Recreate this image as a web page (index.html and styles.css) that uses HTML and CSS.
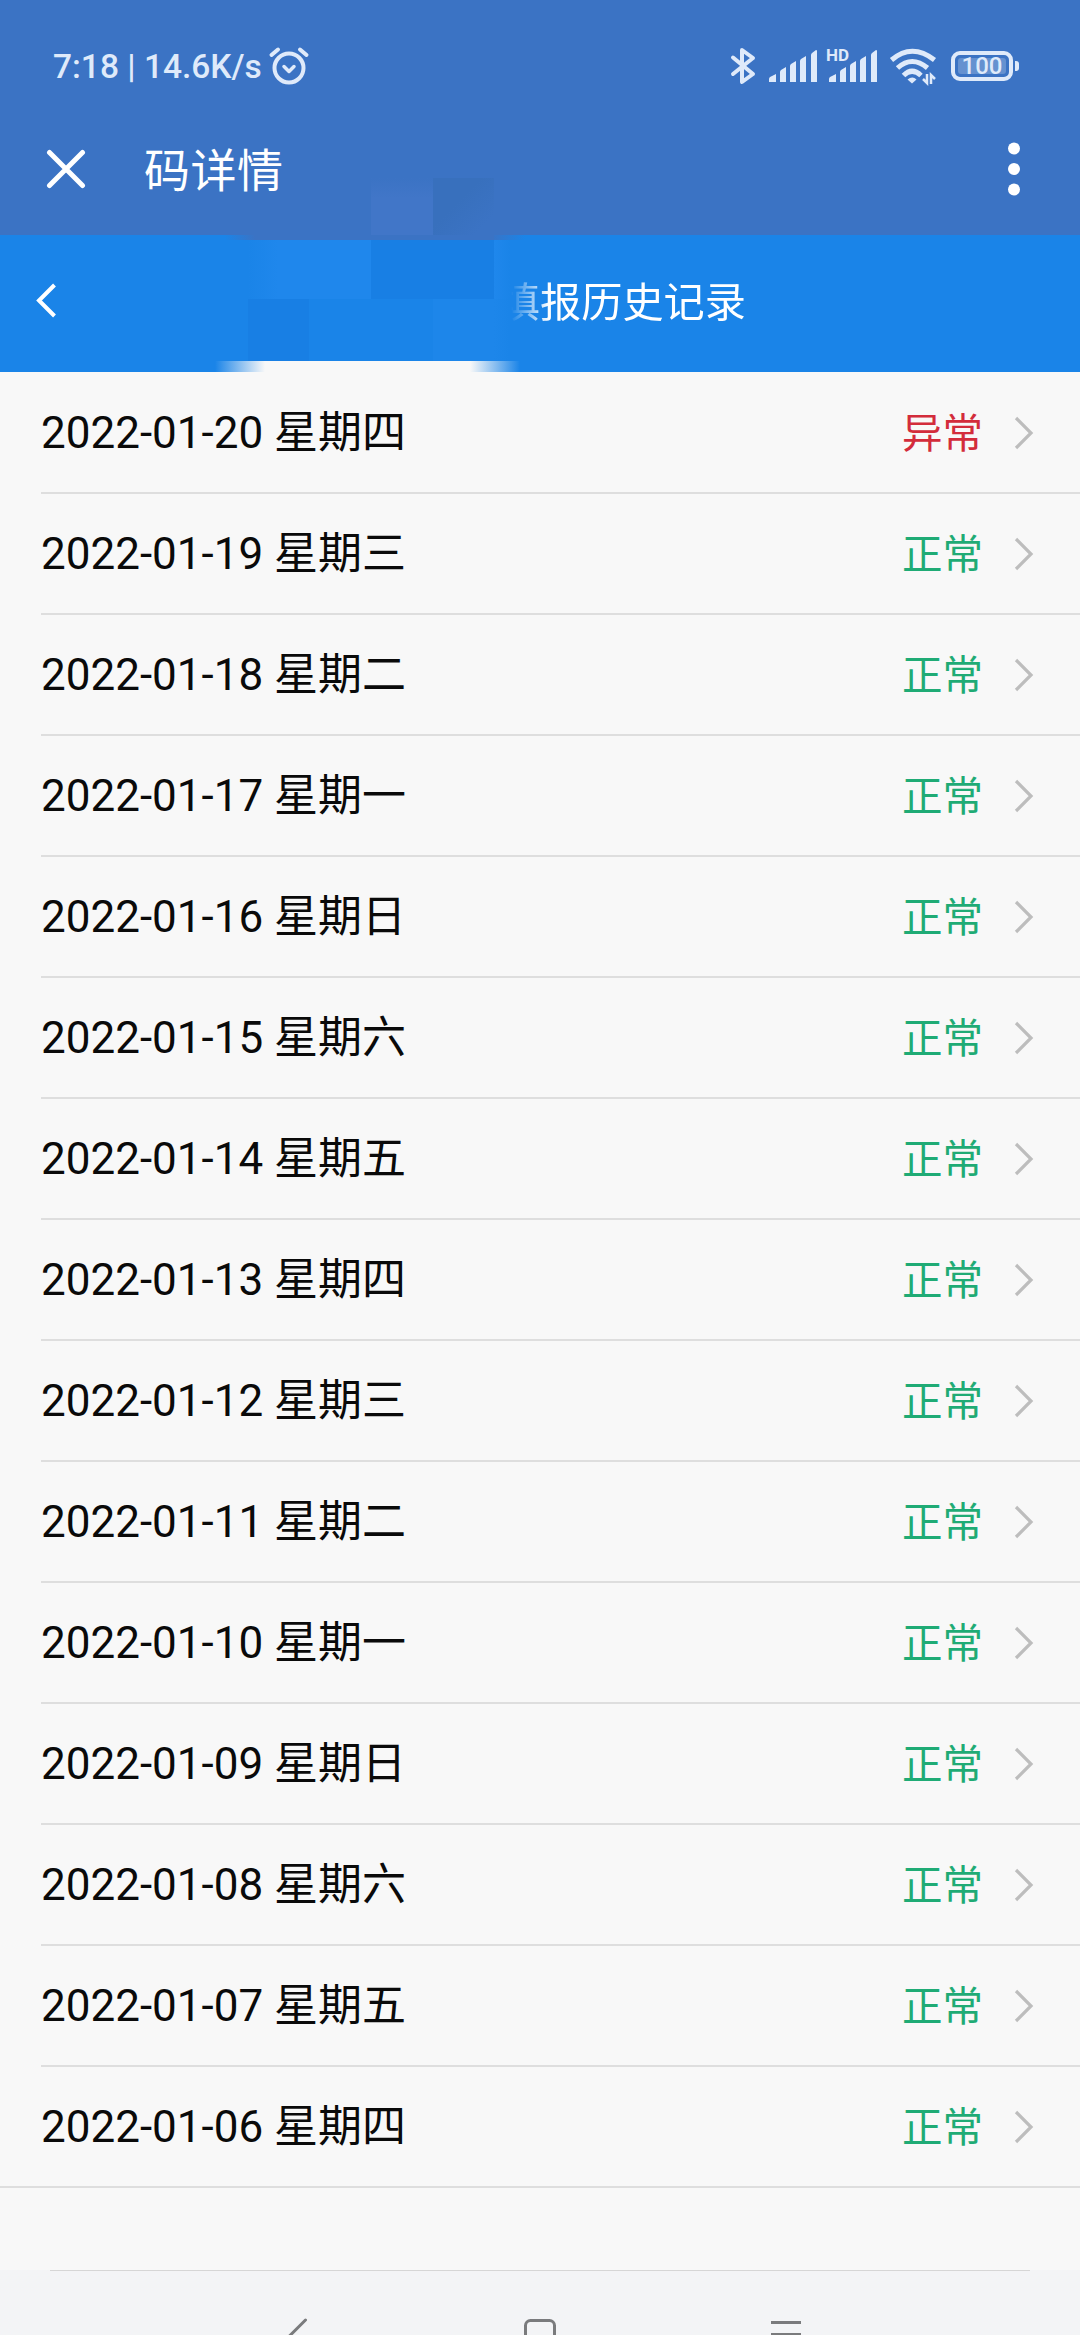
FILE: index.html
```html
<!doctype html>
<html lang="zh-CN">

<head>
    <meta charset="UTF-8">
    <meta name="viewport" content="width=device-width, initial-scale=1.0">
    <title>码详情</title>
    <link rel="stylesheet" href="styles.css">
</head>

<body>
    <div class="top">
        <div class="status-bar">
            <span class="status-text">7:18 | 14.6K/s</span>
            <svg class="alarm" width="42" height="40" viewBox="0 0 42 40" fill="none" stroke="#dfeafa" stroke-linecap="round" stroke-linejoin="round">
                <circle cx="21" cy="22" r="14.5" stroke-width="4" />
                <path d="M3.5 9L10 3.5M38.5 9L32 3.5" stroke-width="4" />
                <path d="M16 20.5l5 5 5-5" stroke-width="3.5" />
            </svg>
            <div class="status-icons">
                <svg width="26" height="40" viewBox="0 0 26 40" fill="none" stroke="#dfeafa" stroke-width="4" stroke-linecap="round" stroke-linejoin="round">
                    <path d="M3 11.5L23 28 12 36V4L23 12 3 28" />
                </svg>
                <svg class="signal" width="50" height="40" viewBox="0 0 50 40" fill="#dfeafa">
                    <path d="M1 36v-3q0-1 1-2l6-3v8zM12 36V26q0-1 1-2l5-3v15zM22 36V20q0-1 1-2l5-3v21zM32 36V15q0-1 1-2l5-3v26zM43 36V9q0-1 1-2l4-3q1 0 1 1v31z" />
                </svg>
                <div class="signal-hd">
                    <span class="hd">HD</span>
                    <svg width="50" height="40" viewBox="0 0 50 40" fill="#dfeafa">
                        <path d="M1 36v-3q0-1 1-2l6-3v8zM12 36V26q0-1 1-2l5-3v15zM22 36V20q0-1 1-2l5-3v21zM32 36V15q0-1 1-2l5-3v26zM43 36V9q0-1 1-2l4-3q1 0 1 1v31z" />
                    </svg>
                </div>
                <svg class="wifi" width="48" height="40" viewBox="0 0 48 40" fill="none" stroke="#dfeafa" stroke-width="5">
                    <path d="M2.500 14Q23-3.500 45.500 14M8.500 22Q23 9 38.500 22M14.500 29.500Q23 21 32 29.500" />
                    <path d="M18.500 33.500q5-4 9 0l-4.500 4z" fill="#dfeafa" stroke="none" />
                    <path d="M38 28v9l-4-4M42 38v-9l4 4" stroke-width="2.5" />
                </svg>
                <div class="battery"><span>100</span></div>
            </div>
        </div>
        <div class="app-bar">
            <svg width="40" height="40" viewBox="0 0 40 40" fill="none" stroke="#fff" stroke-width="5" stroke-linecap="round">
                <path d="M3.5 3.5l33 33M36.5 3.5l-33 33" />
            </svg>
            <h1>码详情</h1>
            <svg class="more" width="12" height="54" viewBox="0 0 12 54" fill="#fff">
                <circle cx="6" cy="6.5" r="6" />
                <circle cx="6" cy="27" r="6" />
                <circle cx="6" cy="47.5" r="6" />
            </svg>
        </div>
    </div>

    <div class="nav-bar">
        <svg width="22" height="36" viewBox="0 0 22 36" fill="none" stroke="#fff" stroke-width="4">
            <path d="M19.5 2L4 17.500l15.500 15.500" />
        </svg>
        <h2>填报历史记录</h2>
        <!-- 姓名打码 -->
        <div class="mosaic">
            <i></i><i></i><i class="light"></i><i class="dark"></i><i></i>
            <i class="b2"></i><i class="b2"></i><i class="b1"></i><i class="b1"></i><i class="b2"></i>
            <i class="b1"></i><i></i><i></i><i class="b3"></i><i class="b3"></i>
        </div>
        <div class="smudge-top"></div>
        <div class="smudge"></div>
    </div>

    <ul class="list" id="list"></ul>

    <div class="system-nav">
        <svg width="1080" height="65" viewBox="0 0 1080 65" fill="none" stroke="#7a7b7d" stroke-width="3">
            <path d="M305.500 50L280 75.500" stroke-linecap="round" />
            <rect x="525.500" y="50.500" width="29" height="30" rx="5" />
            <path d="M771 52.500h30M771 64.500h30" />
        </svg>
    </div>

    <script>
        const days = ['四', '三', '二', '一', '日', '六', '五'];
        const list = document.getElementById('list');

        for (let i = 0; i < 15; i++) {
            const date = '2022-01-' + String(20 - i).padStart(2, '0');
            const error = i === 0;
            const li = document.createElement('li');
            li.innerHTML = `
                <span class="date">${date} 星期${days[i % 7]}</span>
                <span class="state ${error ? 'error' : ''}">${error ? '异常' : '正常'}</span>
                <svg width="20" height="34" viewBox="0 0 20 34" fill="none" stroke="#bdbdbd" stroke-width="3.2">
                    <path d="M2 2l15 15L2 32" />
                </svg>`;
            list.appendChild(li);
        }
    </script>
</body>

</html>
```
FILE: styles.css
```css
* {
    box-sizing: border-box;
}

body {
    margin: 0;
    width: 1080px;
    height: 2335px;
    overflow: hidden;
    display: flex;
    flex-direction: column;
    background-color: #f8f8f8;
    font-family: Roboto, "Noto Sans CJK SC", sans-serif;
    color: #0a0a0a;
}

svg {
    display: block;
    flex-shrink: 0;
}

.top {
    height: 235px;
    background-color: #3b73c4;
}

.status-bar {
    height: 132px;
    padding: 0 61px 0 53px;
    display: flex;
    align-items: center;
    color: #dfeafa;
}

.status-text {
    padding-top: 2px;
    font-size: 33.5px;
    font-weight: 500;
    line-height: 40px;
    white-space: nowrap;
}

.alarm {
    margin-left: 6px;
}

.status-icons {
    margin-left: auto;
    display: flex;
    align-items: center;
}

.signal {
    margin-left: 12px;
}

.signal-hd {
    position: relative;
    margin-left: 10px;
}

.hd {
    position: absolute;
    left: -2px;
    top: 1px;
    font-size: 17px;
    font-weight: 700;
    line-height: 17px;
}

.wifi {
    margin-left: 11px;
}

.battery {
    position: relative;
    width: 62px;
    height: 30px;
    margin: 0 6px 0 14px;
    padding: 3px;
    border: 4px solid #dfeafa;
    border-radius: 9px;
}

.battery span {
    display: block;
    height: 16px;
    border-radius: 3px;
    background-color: #6591d0;
    font-size: 24px;
    font-weight: 500;
    line-height: 17px;
    text-align: center;
}

.battery::after {
    content: "";
    position: absolute;
    right: -10px;
    top: 6px;
    width: 4px;
    height: 10px;
    border-radius: 0 3px 3px 0;
    background-color: #dfeafa;
}

.app-bar {
    height: 74px;
    padding: 0 60px 0 46px;
    display: flex;
    align-items: center;
    color: #fff;
}

.app-bar h1 {
    margin: 0 0 0 58px;
    padding-top: 4px;
    font-size: 46px;
    font-weight: 400;
    line-height: 60px;
    letter-spacing: 0.5px;
}

.more {
    margin-left: auto;
}

.nav-bar {
    position: relative;
    height: 137px;
    padding: 0 334px 6px 35px;
    display: flex;
    align-items: center;
    justify-content: space-between;
    background-color: #1a84e8;
    color: #fff;
}

.nav-bar h2 {
    margin: 0;
    padding-top: 5px;
    font-size: 41.2px;
    font-weight: 400;
    line-height: 60px;
    -webkit-mask-image: linear-gradient(to right, transparent 12px, #000 50px);
    mask-image: linear-gradient(to right, transparent 12px, #000 50px);
}

.mosaic {
    position: absolute;
    left: 248px;
    top: -57px;
    width: 262px;
    display: grid;
    grid-template-columns: 61px 62px 62px 61px 16px;
    grid-template-rows: 62px 59px 62px;
}

.mosaic .light {
    background: linear-gradient(to bottom, #3b73c4, #4176c8 20px);
}

.mosaic .dark {
    background: linear-gradient(to bottom right, #3870bd 40%, #3b73c4 80%);
}

.mosaic .b1 {
    background-color: #187fe4;
}

.mosaic .b2 {
    background-color: #1f87ec;
}

.mosaic .b2:nth-child(6) {
    background: linear-gradient(to right, #1a84e8, #1f87ec 30px);
}

.mosaic .b2:nth-child(10) {
    background: linear-gradient(to right, #1f87ec, #1a84e8);
}

.mosaic .b3 {
    background-color: #1d86ea;
}

.mosaic .b3:last-child {
    background: linear-gradient(to right, #1d86ea, #1a84e8);
}

.smudge-top {
    position: absolute;
    left: 225px;
    top: 0;
    width: 300px;
    height: 5px;
    background: linear-gradient(to right, transparent, #3b73c4 30px, #3b73c4 265px, transparent);
}

.smudge {
    position: absolute;
    left: 215px;
    top: 126px;
    width: 305px;
    height: 12px;
    background: linear-gradient(to right, transparent, #f8f8f8 50px, #f8f8f8 255px, transparent);
}

.list {
    margin: 1px 0 0;
    padding: 0;
    list-style: none;
}

.list li {
    height: 121px;
    margin-left: 41px;
    padding-right: 46px;
    display: flex;
    align-items: center;
    border-bottom: 2px solid #dedede;
}

.list li:last-child {
    margin-left: 0;
    padding-left: 41px;
}

.date {
    font-size: 44px;
    line-height: 60px;
}

.state {
    margin-left: auto;
    margin-right: 31px;
    padding-top: 2px;
    font-size: 40.5px;
    line-height: 60px;
    color: #1fab75;
}

.state.error {
    color: #d32c3b;
}

.system-nav {
    position: relative;
    height: 65px;
    margin-top: auto;
    background-color: #f3f4f6;
}

.system-nav::before {
    content: "";
    position: absolute;
    left: 50px;
    right: 50px;
    top: 0;
    height: 1px;
    background-color: #d6d6d6;
}
```
